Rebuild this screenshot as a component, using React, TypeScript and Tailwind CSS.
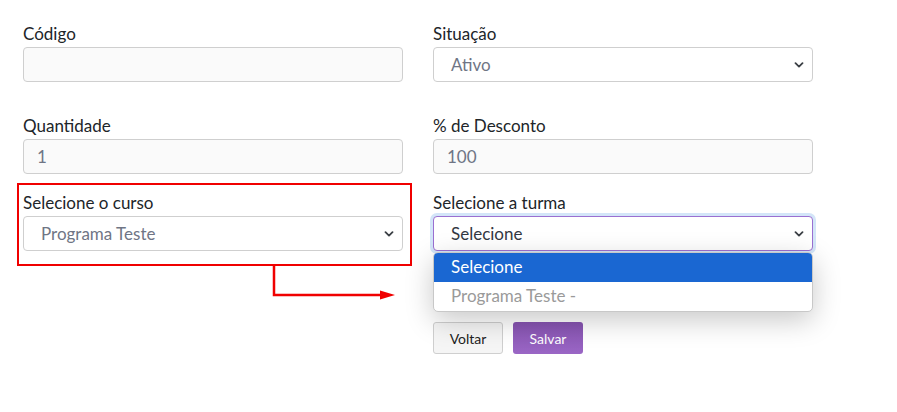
import React from "react";

function Chevron() {
  return (
    <svg width="10" height="6" viewBox="0 0 10 6" className="absolute right-[8px] top-1/2 -translate-y-1/2">
      <path d="M1.5 1.2 L5 4.6 L8.5 1.2" fill="none" stroke="#3b3f45" strokeWidth="1.8" strokeLinecap="round" strokeLinejoin="round" />
    </svg>
  );
}

function Field({ label, children }: { label: string; children: React.ReactNode }) {
  return (
    <div className="flex flex-col">
      <label className="text-[17px] leading-[22px] mb-[2px] text-[#212529]">{label}</label>
      {children}
    </div>
  );
}

export default function App() {
  return (
    <div className="relative w-[897px] h-[412px] bg-white font-['Lato','Liberation_Sans',sans-serif] overflow-hidden">
      <div className="grid grid-cols-[380px_380px] gap-x-[30px] pl-[23px] pt-[23px]">
        <Field label="Código">
          <div className="h-[35px] rounded-[4px] border border-[#cfcfcf] bg-[#fafafa]" />
        </Field>
        <Field label="Situação">
          <div className="relative h-[35px] rounded-[4px] border border-[#cfcfcf] bg-white pl-[17px] flex items-center text-[17px] text-[#6f7585]">
            Ativo
            <Chevron />
          </div>
        </Field>

        <div className="mt-[33px]">
          <Field label="Quantidade">
            <div className="h-[35px] rounded-[4px] border border-[#cfcfcf] bg-[#fafafa] pl-[13px] flex items-center text-[17px] text-[#6f7585]">1</div>
          </Field>
        </div>
        <div className="mt-[33px]">
          <Field label="% de Desconto">
            <div className="h-[35px] rounded-[4px] border border-[#cfcfcf] bg-[#fafafa] pl-[13px] flex items-center text-[17px] text-[#6f7585]">100</div>
          </Field>
        </div>

        <div className="mt-[18px]">
          <Field label="Selecione o curso">
            <div className="relative h-[35px] rounded-[4px] border border-[#cfcfcf] bg-white pl-[17px] flex items-center text-[17px] text-[#6f7585]">
              Programa Teste
              <Chevron />
            </div>
          </Field>
        </div>
        <div className="mt-[18px]">
          <Field label="Selecione a turma">
            <div className="relative">
              <div className="relative h-[35px] rounded-[4px] border border-[#9a6fd1] bg-white pl-[17px] flex items-center text-[17px] text-[#333842] shadow-[0_0_0_3px_#d3e5f8]">
                Selecione
                <Chevron />
              </div>
              <div className="absolute left-0 right-0 top-[36px] z-10 rounded-[5px] bg-white overflow-hidden border border-[#c8c8c8] shadow-[0_8px_28px_rgba(0,0,0,0.22)]">
                <div className="h-[29px] bg-[#1a67d2] pl-[17px] pb-[1px] flex items-center text-[17px] text-white">Selecione</div>
                <div className="h-[29px] pl-[17px] pb-[1px] flex items-center text-[17px] text-[#9a9a9a]">Programa Teste -</div>
              </div>
            </div>
          </Field>
          <div className="flex gap-[10px] mt-[71px]">
            <button className="w-[70px] h-[32px] rounded-[3px] border border-[#cfcfcf] bg-[#f5f5f5] text-[14px] text-[#222]">Voltar</button>
            <button className="w-[70px] h-[32px] rounded-[3px] bg-gradient-to-b from-[#8653b0] to-[#9a66c5] text-[14px] text-white">Salvar</button>
          </div>
        </div>
      </div>

      {/* annotation */}
      <div className="absolute left-[17px] top-[183px] w-[395px] h-[83px] border-2 border-[#f00000] pointer-events-none" />
      <svg className="absolute left-0 top-0 pointer-events-none" width="897" height="412">
        <path d="M274 265 L274 295 L384 295" fill="none" stroke="#f00000" strokeWidth="2.5" />
        <path d="M380 290.5 L395 295 L380 299.5 Z" fill="#f00000" />
      </svg>
    </div>
  );
}
